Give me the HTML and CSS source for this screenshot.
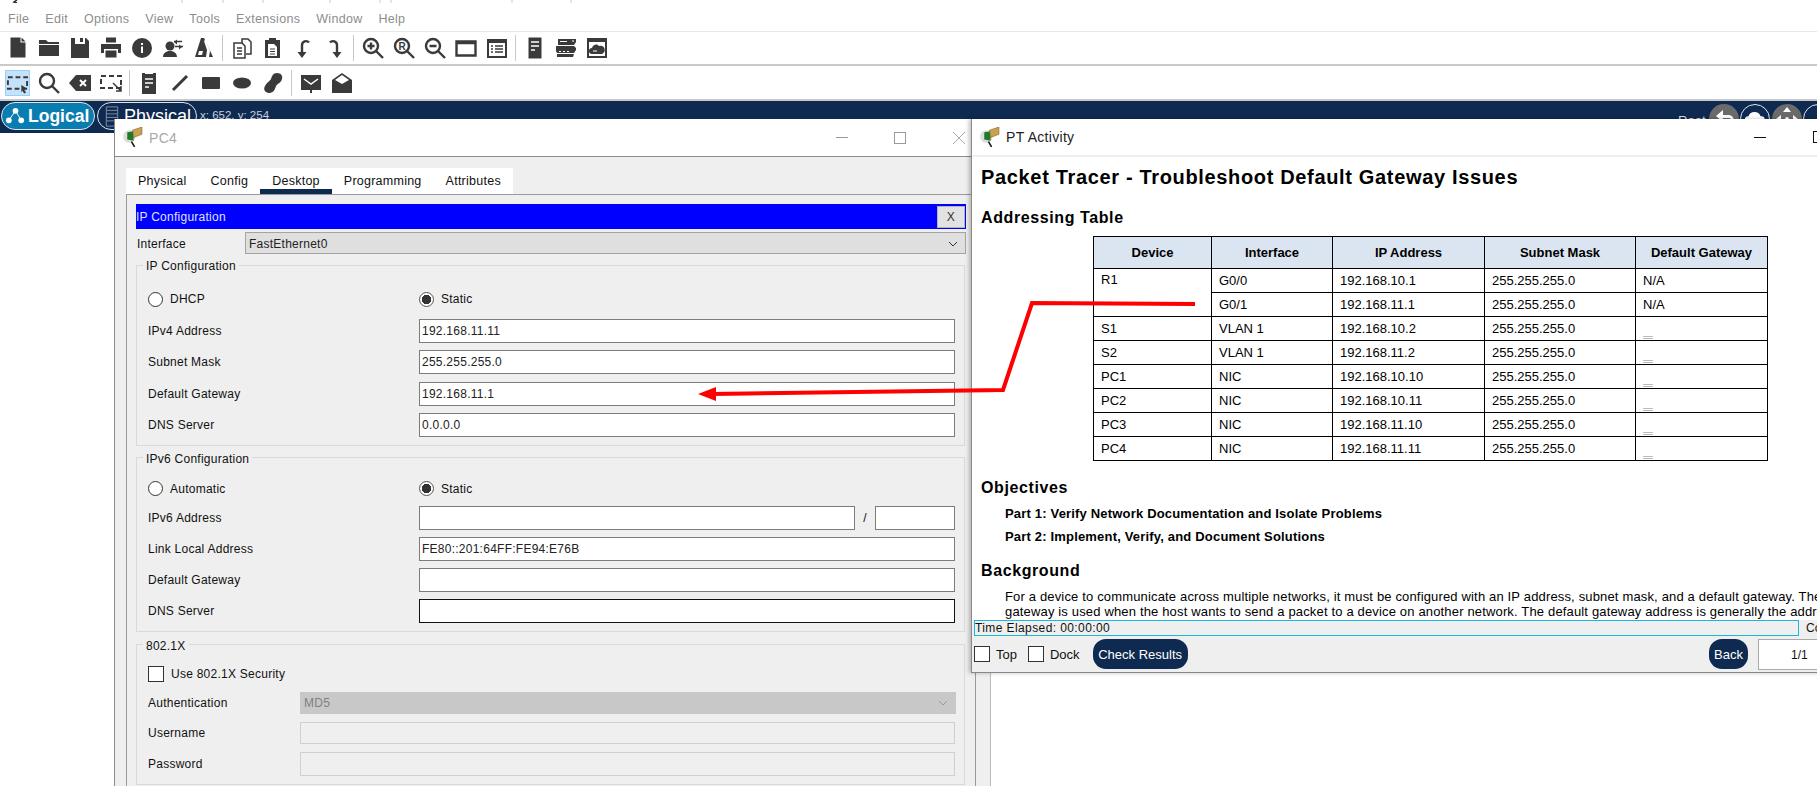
FILE: index.html
```html
<!DOCTYPE html>
<html lang="en">
    <head>
        <meta charset="UTF-8" />
        <meta name="viewport" content="width=device-width, initial-scale=1.0" />
        <title>Packet Tracer</title>
        <link rel="stylesheet" href="styles.css">
    </head>
    <body>
        <div class="app">
            <svg class="title-clip" width="620" height="3">
                <path d="M17 0l-3 2 3 1" fill="none" stroke="#222" stroke-width="1.5" />
                <path d="M182 0v3M223 0v3M263 0v3M330 0v3M380 0v3M391 0v3M512 0v3M571 0v3" stroke="#d8c8a8" />
            </svg>

            <div class="menu">
                <span>File</span><span>Edit</span><span>Options</span><span>View</span><span>Tools</span><span>Extensions</span><span>Window</span><span>Help</span>
            </div>

            <div class="toolbar">
                <span class="tool"><svg viewBox="0 0 24 24"><path d="M4.5 1.500h10v5h5v15h-15zM15.500 1.500l4 4h-4z" /></svg></span>
                <span class="tool"><svg viewBox="0 0 24 24"><path d="M2 4h7l2 2h11v2H2zM2 9h20v11H2z" /></svg></span>
                <span class="tool"><svg viewBox="0 0 24 24"><path fill-rule="evenodd" d="M3 2h4v6h10V2h1l3 3v17H3zM12 2h3v4h-3z" /></svg></span>
                <span class="tool"><svg viewBox="0 0 24 24"><path d="M7 1.500h10v5H7zM2 8h20v9h-3v-4H5v4H2zM6.500 14.500h11v7h-11z" /></svg></span>
                <span class="tool"><svg viewBox="0 0 24 24"><circle cx="12" cy="12" r="10" /><path d="M11 7h2v2h-2zM11 10.500h2V17h-2z" fill="#fff" /></svg></span>
                <span class="tool"><svg viewBox="0 0 24 24"><circle cx="9" cy="10" r="4.500" /><path d="M2 21c0-4 3-5 5-6h4c2 1 5 2 5 6zM12 6h8M16 3.500l-3 2.500 3 2.500M12 11h9M18 8.500l3 2.500-3 2.500" /><path class="line-2" d="M13 5.500h8M14 10.500h8" /></svg></span>
                <span class="tool"><svg viewBox="0 0 24 24"><path d="M9 2h3l1 2-1 1 3 9-1 7H3zM14 6l7 15h-4l1-6z" /><path d="M7 15h4l-1 4H6z" fill="#fff" /></svg></span>
                <span class="sep"></span>
                <span class="tool"><svg class="outline" viewBox="0 0 24 24"><path d="M12 7V3h6l3 3v12h-5" /><path d="M4 7h8l3 3v12H4zM7 12h5M7 15h5M7 18h5" /></svg></span>
                <span class="tool"><svg viewBox="0 0 24 24"><path d="M4 4h4V2h7v2h4v18H4z" /><path d="M7 8h6l3 3v9H7z" fill="#fff" /><path d="M9 13h5M9 15.500h5M9 18h5" stroke="#3a3a3a" /></svg></span>
                <span class="tool"><svg class="outline thick" viewBox="0 0 24 24"><path d="M10 17V9a4 4 0 0 1 7-2.500" /></svg><svg class="head" viewBox="0 0 24 24"><path d="M5.500 16h9L10 22z" /></svg></span>
                <span class="tool"><svg class="outline thick" viewBox="0 0 24 24"><path d="M14 17V9a4 4 0 0 0-7-2.500" /></svg><svg class="head" viewBox="0 0 24 24"><path d="M9.500 16h9L14 22z" /></svg></span>
                <span class="sep"></span>
                <span class="tool"><svg class="outline thick" viewBox="0 0 24 24"><circle cx="10" cy="10" r="7" /><path d="M15 15l7 7M10 6.500v7M6.500 10h7" /></svg></span>
                <span class="tool"><svg class="outline thick" viewBox="0 0 24 24"><circle cx="10" cy="10" r="7" /><path d="M15 15l7 7" /><text class="r-mark" x="10" y="13.500" text-anchor="middle">R</text></svg></span>
                <span class="tool"><svg class="outline thick" viewBox="0 0 24 24"><circle cx="10" cy="10" r="7" /><path d="M15 15l7 7M6.500 10h7" /></svg></span>
                <span class="tool"><svg class="outline thick" viewBox="0 0 24 24"><path d="M2.500 5.500h19v14h-19zM2.500 7h19" /></svg></span>
                <span class="tool"><svg viewBox="0 0 24 24"><path d="M2 3h20v19H2z" /><path d="M4 7h16v13H4z" fill="#fff" /><path d="M6 10h2M10 10h8M6 13h2M10 13h8M6 16h2M10 16h8" stroke="#3a3a3a" stroke-width="1.500" /></svg></span>
                <span class="sep"></span>
                <span class="tool"><svg viewBox="0 0 24 24"><path d="M5.500 1.500h13v21h-13z" /><path d="M8 6h8M8 10h8M8 14h4" stroke="#fff" stroke-width="1.500" /></svg></span>
                <span class="tool"><svg viewBox="0 0 24 24"><path d="M4 3h18v3l-2 3H4zM2 10h18l2 2v2l-2 3H3l-1-2zM3 18h17l-1 3H3z" /><path d="M6 5.500h7M18 5h2M5 15.500h2M9 15.500h2M13 15.500h2" stroke="#fff" /></svg></span>
                <span class="tool"><svg viewBox="0 0 24 24"><path d="M2 2h20v20H2z" /><path d="M4 6h16v14H4z" fill="#fff" /><path d="M7 18a3 3 0 0 1 0-6 4 4 0 0 1 7-2 3.500 3.500 0 0 1 3 8z" /><path d="M8 15h4" stroke="#fff" /></svg></span>
            </div>

            <div class="toolbar second">
                <span class="tool active"><svg class="outline" viewBox="0 0 24 24"><path class="dashed" d="M2 6h20v12H2z" /><path class="solid-fill" d="M16 14l6 4-3 1 2 3-2 1-2-3-1 2z" /></svg></span>
                <span class="tool"><svg class="outline thick" viewBox="0 0 24 24"><circle cx="10" cy="10" r="7" /><path d="M15 15l7 7" /></svg></span>
                <span class="tool"><svg viewBox="0 0 24 24"><path d="M8 4h15v16H8l-7-8z" /><path d="M12 9l6 6M18 9l-6 6" stroke="#fff" stroke-width="2" /></svg></span>
                <span class="tool"><svg class="outline" viewBox="0 0 24 24"><path class="dashed" d="M2 5h20v12H2z" /><path class="thin-arrow" d="M14 12l8 8M22 15v5h-5" /></svg></span>
                <span class="sep"></span>
                <span class="tool"><svg viewBox="0 0 24 24"><path d="M5 2h3v1h8V2h3v21H5z" /><path d="M8 8h8M8 12h8M8 16h4" stroke="#fff" stroke-width="1.500" /></svg></span>
                <span class="tool"><svg viewBox="0 0 24 24"><path d="M5 19L19 5" stroke="#3a3a3a" stroke-width="3" /></svg></span>
                <span class="tool"><svg viewBox="0 0 24 24"><rect x="3" y="6" width="18" height="12" rx="1" /></svg></span>
                <span class="tool"><svg viewBox="0 0 24 24"><ellipse cx="12" cy="12" rx="9" ry="5.500" /></svg></span>
                <span class="tool"><svg viewBox="0 0 24 24"><path d="M16 2c4 0 6 3 5 6-1 4-4 4-6 7-1 3-2 7-7 7-4 0-6-4-4-7 2-4 4-4 6-7 1-3 2-6 6-6z" /></svg></span>
                <span class="sep"></span>
                <span class="tool"><svg viewBox="0 0 24 24"><path d="M2 4h20v15h-9v3h-2v-3H2z" /><path d="M5 8l7 5 7-5" fill="none" stroke="#fff" stroke-width="1.500" /></svg></span>
                <span class="tool"><svg viewBox="0 0 24 24"><path d="M2 9l10-7 10 7v13H2z" /><path d="M5 9l7-5 7 5-7 4z" fill="#fff" /></svg></span>
            </div>

            <div class="nav">
                <span class="pill logical">
                    <svg class="pill-icon" viewBox="0 0 22 22"><path d="M11 5L4 15M11 5l6 10" stroke="#fff" /><circle cx="11" cy="5" r="3" fill="#fff" /><circle cx="4" cy="15" r="3" fill="#fff" /><circle cx="17" cy="15" r="3" fill="#fff" /></svg>
                    Logical
                </span>
                <span class="pill physical">
                    <svg class="pill-icon" viewBox="0 0 16 24"><path d="M1.500 1h13v22h-13zM1.500 5h13M1.500 9h13M1.500 13h13M1.500 17h13" fill="none" stroke="#8b98ac" /></svg>
                    Physical
                </span>
                <span class="coords">x: 652, y: 254</span>
                <span class="root">Root</span>
                <span class="round grey"><svg viewBox="0 0 30 30"><path d="M14 6l-7 6 7 6v-4h6c2 0 3 2 3 5h2c0-6-2-8-6-8h-5z" fill="#fff" /></svg></span>
                <span class="round outlined"><svg viewBox="0 0 30 30"><path d="M8 20a4 4 0 0 1 0-8 7 7 0 0 1 13 0 4 4 0 0 1 1 8z" fill="#fff" /></svg></span>
                <span class="round grey"><svg viewBox="0 0 30 30"><path d="M15 3l4 5h-8zM4 15l5-4v8zM26 15l-5-4v8z" fill="#fff" /><circle cx="15" cy="15" r="2" fill="#fff" /></svg></span>
                <span class="round outlined"></span>
            </div>

            <section class="window pc-window">
                <header class="titlebar">
                    <svg class="app-icon" viewBox="0 0 20 20"><circle cx="7" cy="9" r="6" fill="#ddd" /><path d="M9 14l3 5" stroke="#111" stroke-width="1.500" /><path d="M5 5l6-1v9l-6-1z" fill="#1f7a2c" /><path d="M10 3l9-3v7l-8 3z" fill="#c9a24e" stroke="#6e5520" stroke-width=".5" /></svg>
                    <span class="win-title">PC4</span>
                    <span class="win-controls">
                        <i class="win-min"></i>
                        <i class="win-max"></i>
                        <svg class="win-close" viewBox="0 0 12 12"><path d="M0 0l12 12M12 0L0 12" stroke="#aaa" /></svg>
                    </span>
                </header>

                <nav class="tabs">
                    <span class="tab">Physical</span>
                    <span class="tab">Config</span>
                    <span class="tab current">Desktop</span>
                    <span class="tab">Programming</span>
                    <span class="tab">Attributes</span>
                </nav>

                <div class="pane">
                    <div class="blue-bar">
                        <span>IP Configuration</span>
                        <span class="bar-close">X</span>
                    </div>

                    <div class="interface">
                        <span class="iface-label">Interface</span>
                        <div class="select">FastEthernet0
                            <svg class="chevron" viewBox="0 0 10 6"><path d="M1 1l4 4 4-4" fill="none" stroke="#333" /></svg>
                        </div>
                    </div>

                    <fieldset class="group ip4">
                        <legend>IP Configuration</legend>
                        <div class="choice">
                            <label class="opt"><i class="radio"></i>DHCP</label>
                            <label class="opt"><i class="radio on"></i>Static</label>
                        </div>
                        <div class="rows wide-gap">
                            <div class="row"><span>IPv4 Address</span><div class="field">192.168.11.11</div></div>
                            <div class="row"><span>Subnet Mask</span><div class="field">255.255.255.0</div></div>
                            <div class="row"><span>Default Gateway</span><div class="field">192.168.11.1</div></div>
                            <div class="row"><span>DNS Server</span><div class="field">0.0.0.0</div></div>
                        </div>
                    </fieldset>

                    <fieldset class="group ip6">
                        <legend>IPv6 Configuration</legend>
                        <div class="choice">
                            <label class="opt"><i class="radio"></i>Automatic</label>
                            <label class="opt"><i class="radio on"></i>Static</label>
                        </div>
                        <div class="rows">
                            <div class="row">
                                <span>IPv6 Address</span>
                                <div class="split">
                                    <div class="field"></div>
                                    <span class="slash">/</span>
                                    <div class="field prefix"></div>
                                </div>
                            </div>
                            <div class="row"><span>Link Local Address</span><div class="field">FE80::201:64FF:FE94:E76B</div></div>
                            <div class="row"><span>Default Gateway</span><div class="field"></div></div>
                            <div class="row"><span>DNS Server</span><div class="field focused"></div></div>
                        </div>
                    </fieldset>

                    <fieldset class="group dot1x">
                        <legend>802.1X</legend>
                        <label class="opt"><i class="check"></i>Use 802.1X Security</label>
                        <div class="rows secure">
                            <div class="row short"><span>Authentication</span>
                                <div class="select off">MD5
                                    <svg class="chevron" viewBox="0 0 10 6"><path d="M1 1l4 4 4-4" fill="none" stroke="#999" /></svg>
                                </div>
                            </div>
                            <div class="row short"><span>Username</span><div class="field off"></div></div>
                            <div class="row"><span>Password</span><div class="field off"></div></div>
                        </div>
                    </fieldset>
                </div>
            </section>

            <section class="window pt-window">
                <header class="titlebar">
                    <svg class="app-icon" viewBox="0 0 20 20"><circle cx="7" cy="9" r="6" fill="#ddd" /><path d="M9 14l3 5" stroke="#111" stroke-width="1.500" /><path d="M5 5l6-1v9l-6-1z" fill="#1f7a2c" /><path d="M10 3l9-3v7l-8 3z" fill="#c9a24e" stroke="#6e5520" stroke-width=".5" /></svg>
                    <span class="win-title dark">PT Activity</span>
                    <span class="win-controls">
                        <i class="win-min dark"></i>
                        <i class="win-max dark"></i>
                    </span>
                </header>

                <div class="doc">
                    <h1>Packet Tracer - Troubleshoot Default Gateway Issues</h1>
                    <h2 class="table-title">Addressing Table</h2>
                    <table class="addr">
                        <thead>
                            <tr><th>Device</th><th>Interface</th><th>IP Address</th><th>Subnet Mask</th><th>Default Gateway</th></tr>
                        </thead>
                        <tbody>
                            <tr><td rowspan="2" class="top-cell">R1</td><td>G0/0</td><td>192.168.10.1</td><td>255.255.255.0</td><td>N/A</td></tr>
                            <tr><td>G0/1</td><td>192.168.11.1</td><td>255.255.255.0</td><td>N/A</td></tr>
                            <tr><td>S1</td><td>VLAN 1</td><td>192.168.10.2</td><td>255.255.255.0</td><td class="blank"></td></tr>
                            <tr><td>S2</td><td>VLAN 1</td><td>192.168.11.2</td><td>255.255.255.0</td><td class="blank"></td></tr>
                            <tr><td>PC1</td><td>NIC</td><td>192.168.10.10</td><td>255.255.255.0</td><td class="blank"></td></tr>
                            <tr><td>PC2</td><td>NIC</td><td>192.168.10.11</td><td>255.255.255.0</td><td class="blank"></td></tr>
                            <tr><td>PC3</td><td>NIC</td><td>192.168.11.10</td><td>255.255.255.0</td><td class="blank"></td></tr>
                            <tr><td>PC4</td><td>NIC</td><td>192.168.11.11</td><td>255.255.255.0</td><td class="blank"></td></tr>
                        </tbody>
                    </table>
                    <h2 class="objectives">Objectives</h2>
                    <p class="part first">Part 1: Verify Network Documentation and Isolate Problems</p>
                    <p class="part">Part 2: Implement, Verify, and Document Solutions</p>
                    <h2 class="background">Background</h2>
                    <p class="para">For a device to communicate across multiple networks, it must be configured with an IP address, subnet mask, and a default gateway. The default<br>gateway is used when the host wants to send a packet to a device on another network. The default gateway address is generally the address</p>
                </div>

                <div class="status">
                    <div class="elapsed">Time Elapsed: 00:00:00</div>
                    <span class="completion">Completion: 0%</span>
                </div>

                <div class="actions">
                    <label class="opt"><i class="check"></i>Top</label>
                    <label class="opt"><i class="check"></i>Dock</label>
                    <span class="btn check-results">Check Results</span>
                    <span class="btn back">Back</span>
                    <span class="pager">1/1</span>
                </div>
            </section>

            <svg class="annotation" width="1817" height="786" viewBox="0 0 1817 786">
                <path d="M1195 304L1032 303L1003 390L712 394" fill="none" stroke="#f00" stroke-width="4" />
                <path d="M698 394L716 387V401z" fill="#f00" />
            </svg>
        </div>
    </body>
</html>
```

FILE: styles.css
```css
html, body {
    margin: 0;
    height: 100%;
    background: #fff;
    overflow: hidden;
}

.app {
    position: relative;
    width: 1817px;
    height: 786px;
    overflow: hidden;
    font-family: "Liberation Sans", Arial, sans-serif;
    font-size: 12px;
    color: #111;
}

.title-clip {
    display: block;
}

/* menu and toolbars */
.menu {
    display: flex;
    align-items: center;
    height: 29px;
    padding: 3px 0 0 8px;
    box-sizing: border-box;
    border-bottom: 1px solid #e8e8e8;
    color: #8d8d8d;
    font-size: 12.500px;
    letter-spacing: .3px;
}

.menu span {
    margin-right: 16px;
}

.toolbar {
    display: flex;
    align-items: center;
    height: 32px;
    padding-left: 2px;
    border-bottom: 2px solid #c9c9c9;
}

.toolbar.second {
    height: 33px;
}

.tool {
    position: relative;
    display: flex;
    align-items: center;
    justify-content: center;
    width: 31px;
    height: 26px;
    box-sizing: border-box;
}

.tool svg {
    width: 24px;
    height: 24px;
    fill: #3a3a3a;
    stroke: none;
}

.tool svg.outline {
    fill: none;
    stroke: #3a3a3a;
    stroke-width: 1.5;
}

.tool svg.thick {
    stroke-width: 2.4;
}

.tool svg.head {
    position: absolute;
    left: 3.500px;
    top: 1px;
}

.tool .line-2 {
    stroke: #3a3a3a;
    stroke-width: 1.500;
    fill: none;
}

.tool .r-mark {
    font-size: 10px;
    font-weight: bold;
    fill: #3a3a3a;
    stroke: none;
}

.tool .dashed {
    stroke-width: 2;
    stroke-dasharray: 5 3;
}

.tool .thin-arrow {
    stroke-width: 1.500;
}

.tool .solid-fill {
    fill: #3a3a3a;
    stroke: none;
}

.tool.active {
    background: #c4e2fb;
    border: 1px solid #9ccff6;
    width: 25px;
    margin: 0 3px;
}

.sep {
    width: 7px;
    height: 26px;
    background: linear-gradient(#c9c9c9, #c9c9c9) center / 1px 100% no-repeat;
}

/* dark strip with the Logical and Physical tabs */
.nav {
    display: flex;
    align-items: flex-start;
    height: 32px;
    padding: 1px 0 0 1px;
    box-sizing: border-box;
    background: #0f2a50;
    overflow: hidden;
    color: #fff;
}

.pill {
    display: flex;
    align-items: center;
    height: 28px;
    box-sizing: border-box;
    border: 1px solid #dfe6ee;
    border-radius: 14px;
    font-size: 18px;
    font-weight: bold;
}

.logical {
    width: 94px;
    padding-left: 3px;
    background: #0a7db0;
    font-size: 17.500px;
}

.physical {
    width: 100px;
    margin-left: 2px;
    padding-left: 7px;
    font-weight: normal;
}

.pill-icon {
    width: 21px;
    height: 21px;
    margin-right: 2px;
}

.physical .pill-icon {
    width: 14px;
    margin-right: 5px;
}

.coords {
    margin: 7px 0 0 3px;
    font-size: 11.500px;
    color: #c6d0dc;
}

.root {
    margin: 11px 0 0 auto;
    font-size: 13px;
    color: #d8dfe8;
}

.round {
    flex: none;
    width: 30px;
    height: 30px;
    margin: 2px 0 0 1.500px;
    box-sizing: border-box;
    border-radius: 50%;
}

.root + .round {
    margin-left: 3px;
}

.round svg {
    display: block;
    width: 100%;
    height: 100%;
}

.round.grey {
    background: #6b6b6b;
}

.round.outlined {
    border: 1px solid #dfe6ee;
}

.round:last-child {
    margin-right: -16px;
}

/* floating windows */
.window {
    position: absolute;
    top: 119px;
    display: flex;
    flex-direction: column;
    box-sizing: border-box;
    background: #efefef;
    border-left: 1px solid #8a8a8a;
}

.pc-window {
    left: 114px;
    width: 877px;
    height: 667px;
    border-right: 1px solid #bbb;
}

.pt-window {
    left: 971px;
    width: 900px;
    height: 554px;
    border-bottom: 1px solid #888;
    box-shadow: -2px 0 4px rgba(0, 0, 0, .25);
}

.titlebar {
    display: flex;
    align-items: center;
    flex: none;
    height: 37px;
    padding-left: 7px;
    background: #fff;
    border-bottom: 1px solid #8c8c8c;
}

.pt-window .titlebar {
    border-bottom: 2px solid #eee;
    height: 36px;
}

.app-icon {
    width: 21px;
    height: 21px;
    margin-right: 6px;
}

.win-title {
    font-size: 14px;
    letter-spacing: .3px;
    color: #a8a8a8;
}

.win-title.dark {
    color: #222;
}

.win-controls {
    display: flex;
    align-items: center;
    margin-left: auto;
}

.pc-window .win-controls {
    padding-right: 25px;
}

.win-min {
    width: 12px;
    height: 1px;
    background: #9a9a9a;
}

.win-max {
    width: 12px;
    height: 12px;
    box-sizing: border-box;
    margin-left: 46px;
    border: 1px solid #9a9a9a;
}

.win-close {
    width: 12px;
    height: 12px;
    margin-left: 47px;
}

.pt-window .win-controls {
    margin-right: 46px;
}

.win-min.dark {
    background: #111;
}

.win-max.dark {
    margin-left: 47px;
    border-color: #111;
}

/* PC config panel */
.tabs {
    display: flex;
    align-self: flex-start;
    height: 26px;
    margin: 11px 0 0 11px;
    background: #fff;
    font-size: 12.500px;
}

.tab {
    display: flex;
    align-items: center;
    padding: 0 12px;
    letter-spacing: .25px;
}

.tab.current {
    border-bottom: 5px solid #0f2a50;
    padding-top: 5px;
    box-sizing: border-box;
    height: 26px;
}

.pane {
    flex: 1;
    width: 850px;
    margin-left: 11px;
    padding: 9px 9px 0;
    box-sizing: border-box;
    border: 1px solid #9a9a9a;
    border-bottom: 0;
    letter-spacing: .25px;
}

.blue-bar {
    display: flex;
    align-items: center;
    justify-content: space-between;
    height: 25px;
    box-sizing: border-box;
    padding-right: 1px;
    background: #00f;
    color: #dfe3ff;
}

.bar-close {
    display: flex;
    align-items: center;
    justify-content: center;
    width: 28px;
    height: 22px;
    box-sizing: border-box;
    border: 1px solid #b5b5b5;
    background: #e2e2e2;
    color: #333;
}

.interface {
    display: grid;
    grid-template-columns: 108px 1fr;
    align-items: center;
    margin: 3px 0;
    padding-left: 1px;
}

.iface-label {
    padding-top: 1px;
}

.select {
    position: relative;
    display: flex;
    align-items: center;
    justify-content: space-between;
    height: 22px;
    padding: 1px 7px 0 3px;
    box-sizing: border-box;
    background: #dfdfdf;
    border: 1px solid #a4a4a4;
    color: #222;
}

.select.off {
    background: #c8c8c8;
    border-color: #c8c8c8;
    color: #808080;
}

.chevron {
    width: 10px;
    height: 6px;
}

.group {
    margin: 5px 1px 0 0;
    padding: 0 9px 8px 11px;
    border: 1px solid #d9d9d9;
    min-width: 0;
}

.interface + .group {
    margin-top: 0;
}

.group legend {
    padding: 2px 3px 0;
    margin-left: -5px;
    line-height: 14px;
}

.choice {
    display: grid;
    grid-template-columns: 271px 1fr;
}

.ip4 .choice {
    padding-top: 18px;
    margin-bottom: 12px;
}

.ip6 {
    margin-top: 4px;
}

.ip6 .choice {
    padding-top: 15px;
    margin-bottom: 9px;
}

.opt {
    display: flex;
    align-items: center;
    height: 16px;
    gap: 7px;
}

.radio {
    width: 15px;
    height: 15px;
    box-sizing: border-box;
    border: 1px solid #333;
    border-radius: 50%;
    background: #fff;
}

.radio.on {
    border-color: #555;
    background: radial-gradient(circle, #333 0 4.500px, #fff 5px);
}

.check {
    width: 16px;
    height: 16px;
    box-sizing: border-box;
    border: 1px solid #333;
    background: #fff;
}

.rows {
    display: flex;
    flex-direction: column;
    gap: 7px;
}

.wide-gap {
    gap: 7.300px;
}

.row {
    display: grid;
    grid-template-columns: 271px 1fr;
    align-items: center;
    height: 24px;
}

.field {
    display: flex;
    align-items: center;
    height: 24px;
    padding-left: 2px;
    box-sizing: border-box;
    background: #fff;
    border: 1px solid #7c7c7c;
    color: #222;
}

.field.focused {
    border-color: #111;
}

.split {
    display: flex;
    align-items: center;
}

.split .field {
    flex: 1;
}

.split .prefix {
    flex: none;
    width: 80px;
}

.slash {
    width: 20px;
    text-align: center;
}

.dot1x {
    padding-top: 13px;
}

.dot1x legend + .opt {
    margin-bottom: 10px;
}

.dot1x .row:first-child .select {
    width: 656px;
}

.row.short {
    height: 22px;
}

.secure {
    gap: 8px;
}

.secure .row {
    grid-template-columns: 152px 1fr;
}

.secure .short .field {
    height: 22px;
}

.field.off {
    background: #efefef;
    border-color: #cfcfcf;
}

/* activity document */
.doc {
    flex: 1;
    min-height: 0;
    padding: 8px 0 0 9px;
    background: #fff;
    overflow: hidden;
    color: #000;
}

.doc h1 {
    margin: 0;
    font-size: 20px;
    line-height: 24px;
    letter-spacing: .66px;
}

.doc h2 {
    margin: 0;
    font-size: 16px;
    line-height: 20px;
    letter-spacing: .6px;
}

.table-title {
    padding-top: 19px;
}

.addr {
    width: 675px;
    margin: 8px 0 0 112px;
    border-collapse: collapse;
    table-layout: fixed;
    font-size: 13px;
}

.addr th {
    height: 31px;
    padding: 0;
    background: #dbe5f1;
    border: 1px solid #000;
}

.addr th:nth-child(1) { width: 117px; }
.addr th:nth-child(2) { width: 120px; }
.addr th:nth-child(3) { width: 151px; }
.addr th:nth-child(4) { width: 150px; }

.addr td {
    height: 23px;
    padding: 0 7px;
    border: 1px solid #000;
}

.addr td.top-cell {
    vertical-align: top;
    padding-top: 3px;
}

.addr td.blank {
    position: relative;
}

.addr td.blank::after {
    content: "";
    position: absolute;
    left: 7px;
    bottom: 1px;
    width: 10px;
    height: 3px;
    border-top: 1px solid #bbb;
    border-bottom: 1px solid #bbb;
    box-sizing: border-box;
}

.objectives {
    padding-top: 17px;
}

.part {
    margin: 7px 0 0 24px;
    font-size: 13px;
    font-weight: bold;
    line-height: 18px;
    letter-spacing: .18px;
}

.part + .part {
    margin-top: 5px;
}

.background {
    padding-top: 15px;
}

.para {
    margin: 8px 0 0 24px;
    font-size: 13px;
    line-height: 15px;
    letter-spacing: .16px;
    white-space: nowrap;
}

.status {
    display: flex;
    align-items: center;
    flex: none;
    height: 16px;
    background: #efefef;
    white-space: nowrap;
}

.elapsed {
    flex: none;
    width: 825px;
    height: 16px;
    margin-left: 2px;
    box-sizing: border-box;
    border: 1px solid #18b8dc;
    font-size: 12px;
    line-height: 14px;
    letter-spacing: .4px;
}

.completion {
    flex: none;
    margin-left: 7px;
}

.actions {
    display: flex;
    align-items: center;
    flex: none;
    height: 36px;
    padding-left: 2px;
    background: #efefef;
}

.actions .opt {
    margin-right: 11px;
    gap: 6px;
    font-size: 13px;
}

.btn {
    display: flex;
    align-items: center;
    justify-content: center;
    height: 30px;
    box-sizing: border-box;
    border-radius: 13px;
    background: #0f2a50;
    color: #fff;
    font-size: 13px;
}

.check-results {
    width: 95px;
    margin-left: 2px;
}

.back {
    width: 39px;
    margin-left: auto;
}

.pager {
    width: 113px;
    height: 31px;
    margin-left: 10px;
    box-sizing: border-box;
    background: #fff;
    border: 1px solid #aaa;
    padding: 8px 0 0 32px;
}

/* red arrow drawn over both windows */
.annotation {
    position: absolute;
    left: 0;
    top: 0;
    pointer-events: none;
}
```
